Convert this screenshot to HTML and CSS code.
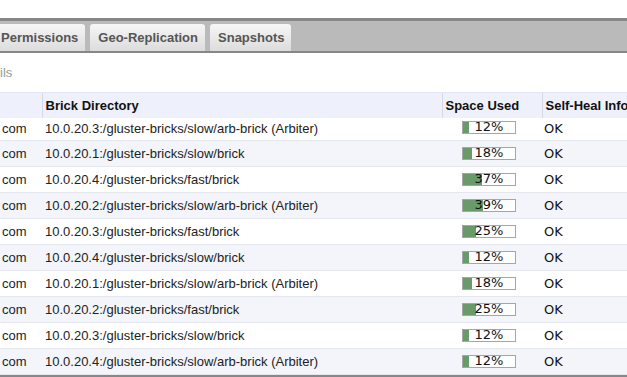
FILE: index.html
```html
<!DOCTYPE html>
<html>
<head>
<meta charset="utf-8">
<link rel="stylesheet" href="styles.css">
</head>
<body>
<div class="page">
  <div class="topspace"></div>
  <div class="tabbar">
    <div class="tab first">Permissions</div>
    <div class="tab">Geo-Replication</div>
    <div class="tab">Snapshots</div>
  </div>
  <div class="subtitle">ils</div>
  <table class="bricks">
    <colgroup>
      <col class="c-host"><col class="c-dir"><col class="c-space"><col class="c-heal">
    </colgroup>
    <thead>
      <tr><th></th><th>Brick Directory</th><th>Space Used</th><th>Self-Heal Info</th></tr>
    </thead>
    <tbody>
      <tr class="firstrow"><td>com</td><td>10.0.20.3:/gluster-bricks/slow/arb-brick (Arbiter)</td><td><div class="bar"><div class="track"><div class="fill" style="width:12%"></div></div><span class="pct">12%</span></div></td><td class="ok">OK</td></tr>
      <tr><td>com</td><td>10.0.20.1:/gluster-bricks/slow/brick</td><td><div class="bar"><div class="track"><div class="fill" style="width:18%"></div></div><span class="pct">18%</span></div></td><td class="ok">OK</td></tr>
      <tr><td>com</td><td>10.0.20.4:/gluster-bricks/fast/brick</td><td><div class="bar"><div class="track"><div class="fill" style="width:37%"></div></div><span class="pct">37%</span></div></td><td class="ok">OK</td></tr>
      <tr><td>com</td><td>10.0.20.2:/gluster-bricks/slow/arb-brick (Arbiter)</td><td><div class="bar"><div class="track"><div class="fill" style="width:39%"></div></div><span class="pct">39%</span></div></td><td class="ok">OK</td></tr>
      <tr><td>com</td><td>10.0.20.3:/gluster-bricks/fast/brick</td><td><div class="bar"><div class="track"><div class="fill" style="width:25%"></div></div><span class="pct">25%</span></div></td><td class="ok">OK</td></tr>
      <tr><td>com</td><td>10.0.20.4:/gluster-bricks/slow/brick</td><td><div class="bar"><div class="track"><div class="fill" style="width:12%"></div></div><span class="pct">12%</span></div></td><td class="ok">OK</td></tr>
      <tr><td>com</td><td>10.0.20.1:/gluster-bricks/slow/arb-brick (Arbiter)</td><td><div class="bar"><div class="track"><div class="fill" style="width:18%"></div></div><span class="pct">18%</span></div></td><td class="ok">OK</td></tr>
      <tr><td>com</td><td>10.0.20.2:/gluster-bricks/fast/brick</td><td><div class="bar"><div class="track"><div class="fill" style="width:25%"></div></div><span class="pct">25%</span></div></td><td class="ok">OK</td></tr>
      <tr><td>com</td><td>10.0.20.3:/gluster-bricks/slow/brick</td><td><div class="bar"><div class="track"><div class="fill" style="width:12%"></div></div><span class="pct">12%</span></div></td><td class="ok">OK</td></tr>
      <tr><td>com</td><td>10.0.20.4:/gluster-bricks/slow/arb-brick (Arbiter)</td><td><div class="bar"><div class="track"><div class="fill" style="width:12%"></div></div><span class="pct">12%</span></div></td><td class="ok">OK</td></tr>
    </tbody>
  </table>
  <div class="bottomline"></div>
</div>
</body>
</html>
```

FILE: styles.css
```css
html, body {
  margin: 0;
  padding: 0;
  background: #fff;
  overflow: hidden;
}
.page {
  width: 627px;
  height: 377px;
  overflow: hidden;
  font-family: "Liberation Sans", Arial, sans-serif;
  font-size: 13px;
  color: #222;
  display: flex;
  flex-direction: column;
}
.topspace {
  height: 18px;
  flex: none;
}
.tabbar {
  flex: none;
  height: 30px;
  border-top: 3px solid #878787;
  border-bottom: 2px solid #878787;
  background: #bababa;
  display: flex;
  align-items: flex-end;
  gap: 5px;
}
.tab {
  height: 27px;
  box-sizing: border-box;
  padding: 0 7px 0 8px;
  display: flex;
  align-items: center;
  font-weight: bold;
  color: #555;
  background: linear-gradient(#f6f6f6, #dcdcdc);
  border-radius: 3px 3px 0 0;
}
.tab.first {
  margin-left: -7px;
}
.subtitle {
  flex: none;
  height: 39px;
  display: flex;
  align-items: center;
  color: #999;
  padding-left: 0;
}
.bricks {
  flex: none;
  border-collapse: collapse;
  table-layout: fixed;
  width: 742px;
}
.c-host { width: 42px; }
.c-dir { width: 400px; }
.c-space { width: 100px; }
.c-heal { width: 200px; }
.bricks th {
  height: 25px;
  box-sizing: border-box;
  padding: 0 3px;
  text-align: left;
  font-weight: bold;
  color: #111;
  background: #eef0fb;
  border-top: 1px solid #e3e6f2;
  border-left: 1px solid #d6dae8;
  white-space: nowrap;
  overflow: hidden;
}
.bricks th:first-child {
  border-left: none;
}
.bricks td {
  height: 25px;
  box-sizing: content-box;
  padding: 0 3px;
  border-bottom: 1px solid #e4e7ee;
  white-space: nowrap;
  overflow: hidden;
  vertical-align: middle;
}
.bricks td:first-child {
  padding-left: 2px;
}
.bricks tbody tr:nth-child(even) td {
  background: #f3f5fa;
}
.bricks tr.firstrow td {
  height: 22px;
  padding-top: 0;
}
.bricks tr.firstrow td > * {
  margin-top: -3px;
}
.ok {
  font-family: "DejaVu Sans", sans-serif;
  color: #111;
  padding-left: 2px !important;
}
.bar {
  display: grid;
  width: 54px;
  margin-left: 17px;
  align-items: center;
  justify-items: center;
}
.track {
  grid-area: 1 / 1;
  width: 54px;
  height: 13px;
  box-sizing: border-box;
  border: 1px solid #a6a6a6;
  background: #fff;
  display: flex;
}
.fill {
  height: 100%;
  background: #699a69;
}
.pct {
  grid-area: 1 / 1;
  font-family: "DejaVu Sans", sans-serif;
  font-size: 13px;
  line-height: 13px;
  color: #111;
  position: relative;
  top: -1px;
}
.bottomline {
  flex: none;
  height: 3px;
  background: #878787;
}
```
